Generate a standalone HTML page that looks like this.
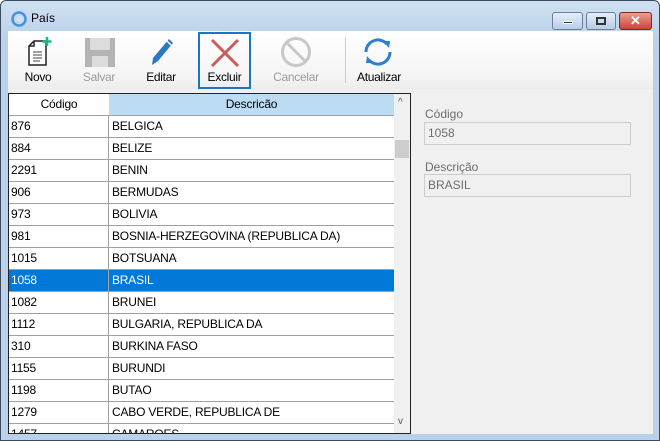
<!DOCTYPE html>
<html><head><meta charset="utf-8"><style>
*{box-sizing:border-box;margin:0;padding:0}
body{width:660px;height:441px;overflow:hidden;background:#fff;font-family:"Liberation Sans",sans-serif;font-size:12px;position:relative}
.win{position:absolute;left:0;top:0;width:660px;height:441px;background:linear-gradient(#cfe0f3,#b9d1ea 40px,#b9d1ea);border:1px solid #3c4b5e;border-radius:6px 6px 0 0}
.client{position:absolute;left:7px;top:30px;width:645px;height:403px;background:#f0f0f0}
.tb{position:absolute;left:0;top:0;width:645px;height:58px;background:linear-gradient(#fff,#f4f4f4 80%,#ececec)}
.btn{position:absolute;top:1px;height:56px;text-align:center;font-size:12px;letter-spacing:-0.3px}
.btn span{position:absolute;left:0;right:0;top:38px}
.grid{position:absolute;left:0;top:62px;width:403px;height:341px;background:#fff;border:1px solid #222;overflow:hidden}
.row{position:absolute;left:0;width:385px;height:22px;border-bottom:1px solid #a0a0a0;letter-spacing:-0.2px}
.row div{position:absolute;top:0;height:21px;line-height:21px;padding-left:2px}
.c1{left:0;width:100px;border-right:1px solid #a0a0a0}
.c2{left:100px;width:285px;padding-left:3px!important}
.sel{background:#0078d7;color:#fff}
.sb{position:absolute;left:385px;top:0;width:16px;height:340px;background:#f0f0f0}
.lbl{position:absolute;left:417px;color:#6d6d6d;font-size:12px}
.tx{position:absolute;left:416px;width:207px;height:23px;border:1px solid #ccc;background:#f0f0f0;color:#6d6d6d;line-height:21px;padding-left:3px}
</style></head><body>
<div class="win">
 <svg style="position:absolute;left:10px;top:10px" width="16" height="16" viewBox="0 0 16 16"><circle cx="8" cy="8" r="6.5" fill="none" stroke="#4a90d9" stroke-width="2.5"/><circle cx="9" cy="8" r="3" fill="#cfe0f3"/></svg>
 <div style="position:absolute;left:30px;top:10px;font-size:12px">País</div>
 <div style="position:absolute;left:551px;top:11px;width:31px;height:18px;border:1px solid #6b7f98;border-radius:3px;background:linear-gradient(#e4eef9,#b8cde6)"><div style="position:absolute;left:10px;top:8px;width:10px;height:3px;background:#333;border:1px solid #fff"></div></div>
 <div style="position:absolute;left:585px;top:11px;width:30px;height:18px;border:1px solid #6b7f98;border-radius:3px;background:linear-gradient(#e4eef9,#b8cde6)"><div style="position:absolute;left:9px;top:4px;width:10px;height:8px;border:2px solid #333"></div></div>
 <div style="position:absolute;left:618px;top:11px;width:33px;height:18px;border:1px solid #7a2a20;border-radius:3px;background:linear-gradient(#e8a090,#c8443a);color:#fff;text-align:center;font-weight:bold;font-size:13px;line-height:16px">✕</div>
 <div class="client">
  <div class="tb">
   <div class="btn" style="left:8px;width:44px">
    <svg style="position:absolute;left:11px;top:5px" width="26" height="30" viewBox="0 0 26 30"><path d="M7 4h12v24H2V9z" fill="#fff" stroke="#222" stroke-width="1.5"/><path d="M2 9h5V4" fill="none" stroke="#222" stroke-width="1.5"/><path d="M6 15h9M6 18h9M6 21h9M6 24h7" stroke="#444"/><path d="M20 0v9M15.5 4.5h9" stroke="#1bb58e" stroke-width="2.5"/></svg>
    <span>Novo</span></div>
   <div class="btn" style="left:69px;width:44px;color:#9b9b9b">
    <svg style="position:absolute;left:7px;top:5px" width="32" height="30" viewBox="0 0 32 30"><rect x="1" y="1" width="30" height="29" fill="#b4b4b4"/><rect x="6" y="1" width="20" height="12" fill="#dcdcdc"/><rect x="8" y="19" width="16" height="11" fill="#dcdcdc"/></svg>
    <span>Salvar</span></div>
   <div class="btn" style="left:133px;width:40px">
    <svg style="position:absolute;left:8px;top:5px" width="26" height="30" viewBox="0 0 26 30"><path d="M20 2l4 4L9 24l-6 4 1-7z" fill="#2b78c5"/><path d="M18 4l4 4" stroke="#fff" stroke-width="1.5"/></svg>
    <span>Editar</span></div>
   <div class="btn" style="left:190px;width:53px;height:57px;top:1px;border:2px solid #1d74c6">
    <svg style="position:absolute;left:10px;top:4px" width="30" height="30" viewBox="0 0 30 30"><path d="M2 2L28 28M28 2L2 28" stroke="#cd5a5a" stroke-width="3"/></svg>
    <span style="top:36px">Excluir</span></div>
   <div class="btn" style="left:260px;width:56px;color:#9b9b9b">
    <svg style="position:absolute;left:12px;top:4px" width="32" height="32" viewBox="0 0 32 32"><circle cx="16" cy="16" r="13.5" fill="none" stroke="#c8c8c8" stroke-width="3"/><path d="M6.5 6.5L25.5 25.5" stroke="#c8c8c8" stroke-width="3"/></svg>
    <span>Cancelar</span></div>
   <div style="position:absolute;left:337px;top:6px;width:1px;height:46px;background:#ccc"></div>
   <div class="btn" style="left:343px;width:56px">
    <svg style="position:absolute;left:10px;top:4px" width="34" height="32" viewBox="0 0 34 32"><path d="M5 16A12 12 0 0 1 26 8" fill="none" stroke="#2b7ed2" stroke-width="3"/><path d="M29 16A12 12 0 0 1 8 24" fill="none" stroke="#2b7ed2" stroke-width="3"/><path d="M22 5l7 0-1 7z" fill="#2b7ed2"/><path d="M12 27l-7 0 1-7z" fill="#2b7ed2"/></svg>
    <span>Atualizar</span></div>
  </div>
  <div class="grid">
   <div class="row" style="top:0;height:22px;border-bottom:1px solid #a0a0a0"><div class="c1" style="text-align:center;padding:0;border-right:none">Código</div><div class="c2" style="background:#bcdcf3;text-align:center;padding:0!important">Descricão</div></div>
   <div class="row" style="top:22px"><div class="c1">876</div><div class="c2">BELGICA</div></div>
   <div class="row" style="top:44px"><div class="c1">884</div><div class="c2">BELIZE</div></div>
   <div class="row" style="top:66px"><div class="c1">2291</div><div class="c2">BENIN</div></div>
   <div class="row" style="top:88px"><div class="c1">906</div><div class="c2">BERMUDAS</div></div>
   <div class="row" style="top:110px"><div class="c1">973</div><div class="c2">BOLIVIA</div></div>
   <div class="row" style="top:132px"><div class="c1">981</div><div class="c2">BOSNIA-HERZEGOVINA (REPUBLICA DA)</div></div>
   <div class="row" style="top:154px"><div class="c1">1015</div><div class="c2">BOTSUANA</div></div>
   <div class="row sel" style="top:176px"><div class="c1">1058</div><div class="c2">BRASIL</div></div>
   <div class="row" style="top:198px"><div class="c1">1082</div><div class="c2">BRUNEI</div></div>
   <div class="row" style="top:220px"><div class="c1">1112</div><div class="c2">BULGARIA, REPUBLICA DA</div></div>
   <div class="row" style="top:242px"><div class="c1">310</div><div class="c2">BURKINA FASO</div></div>
   <div class="row" style="top:264px"><div class="c1">1155</div><div class="c2">BURUNDI</div></div>
   <div class="row" style="top:286px"><div class="c1">1198</div><div class="c2">BUTAO</div></div>
   <div class="row" style="top:308px"><div class="c1">1279</div><div class="c2">CABO VERDE, REPUBLICA DE</div></div>
   <div class="row" style="top:330px"><div class="c1">1457</div><div class="c2">CAMAROES</div></div>
   <div class="sb"><div style="position:absolute;left:4px;top:3px;font-size:10px;color:#555">^</div><div style="position:absolute;left:1px;top:46px;width:14px;height:18px;background:#cdcdcd"></div><div style="position:absolute;left:4px;top:322px;font-size:10px;color:#555">v</div></div>
  </div>
  <div class="lbl" style="top:76px">Código</div>
  <div class="tx" style="top:91px">1058</div>
  <div class="lbl" style="top:129px">Descrição</div>
  <div class="tx" style="top:143px">BRASIL</div>
 </div>
</div>
</body></html>
